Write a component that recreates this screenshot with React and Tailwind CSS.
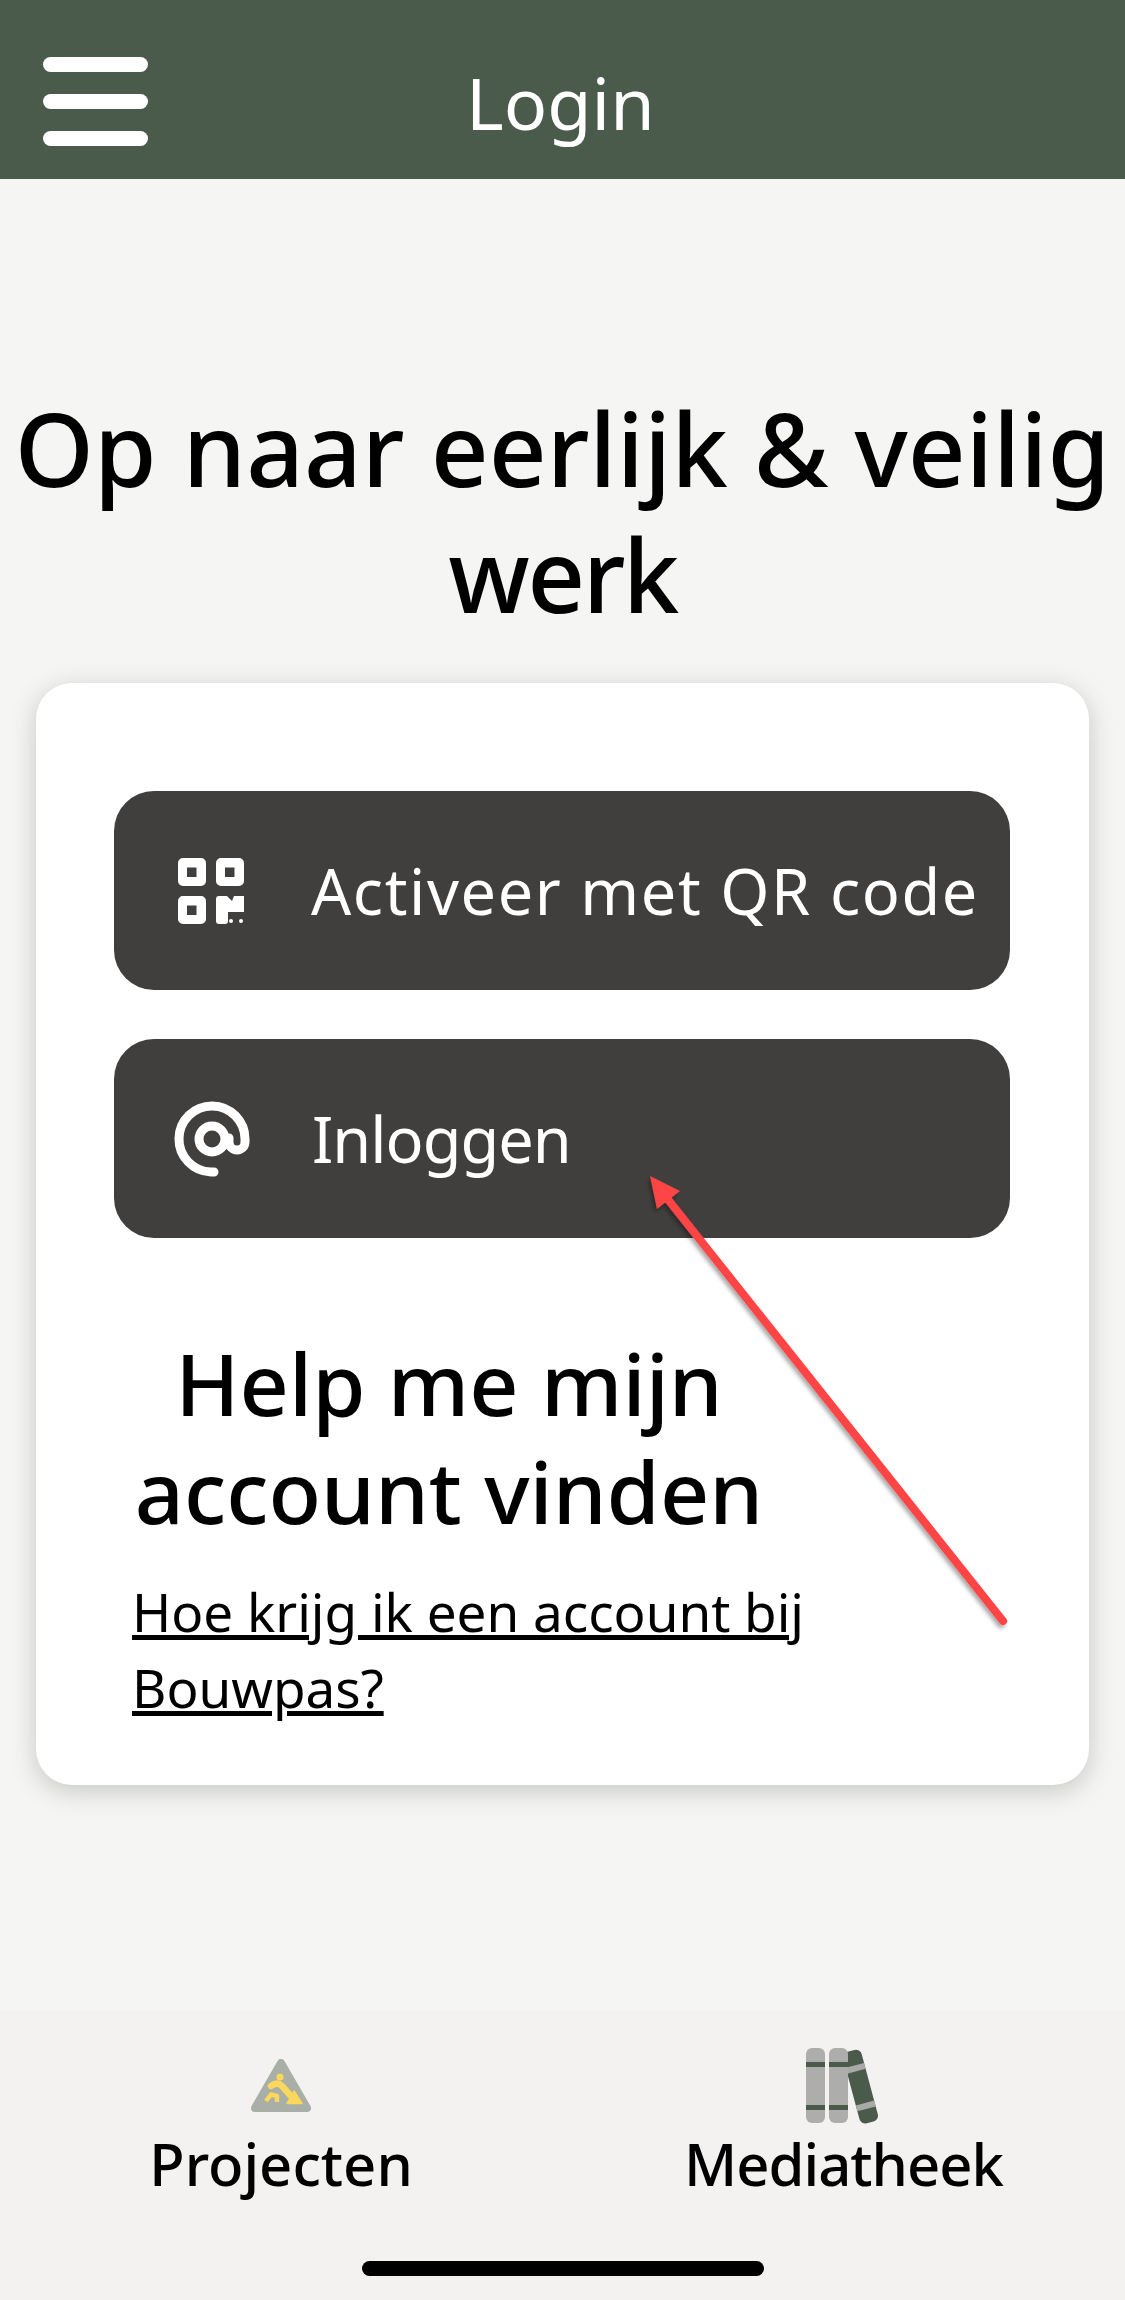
import React from 'react';

const font = { fontFamily: '"Noto Sans", sans-serif' };

const QrIcon = () => (
  <svg width="66" height="66" viewBox="0 0 66 66" fill="#fff" fillRule="evenodd" className="shrink-0">
    <path d="M5 0h18a5 5 0 0 1 5 5v18a5 5 0 0 1-5 5H5a5 5 0 0 1-5-5V5a5 5 0 0 1 5-5zM9 9.500v9.500h9.500V9.500z" />
    <path d="M43 0h18a5 5 0 0 1 5 5v18a5 5 0 0 1-5 5H43a5 5 0 0 1-5-5V5a5 5 0 0 1 5-5zM47 9.500v9.500h9.500V9.500z" />
    <path d="M5 38h18a5 5 0 0 1 5 5v18a5 5 0 0 1-5 5H5a5 5 0 0 1-5-5V43a5 5 0 0 1 5-5zM9 47.500v9.500h9.500v-9.500z" />
    <path d="M41 38h8l5 5 2-5h10v16h-16v9a3 3 0 0 1-3 3h-6a3 3 0 0 1-3-3V41a3 3 0 0 1 3-3z" />
    <circle cx="53" cy="63" r="2" />
    <circle cx="63" cy="63" r="2" />
  </svg>
);

const AtIcon = () => (
  <svg width="76" height="76" viewBox="0 0 76 76" fill="none" stroke="#fff" strokeWidth="9" strokeLinecap="round" className="shrink-0">
    <path d="M40 71h-3A33 33 0 1 1 71 38v3a8 8 0 0 1-16 0v-4" />
    <circle cx="38" cy="38" r="13" />
  </svg>
);

const WorkerIcon = () => (
  <svg width="60" height="53" viewBox="0 0 60 53">
    <path d="M30 4 L56 49 H4 Z" fill="#a9aea7" stroke="#a9aea7" strokeWidth="8" strokeLinejoin="round" />
    <circle cx="29" cy="18" r="3.500" fill="#fbd75b" />
    <path d="M20 27C24 24 28 24 31 27L39 36" fill="none" stroke="#fbd75b" strokeWidth="6.500" strokeLinecap="round" strokeLinejoin="round" />
    <path d="M15 42L20 35.500L26 37V43" fill="none" stroke="#fbd75b" strokeWidth="4.500" strokeLinejoin="round" />
    <path d="M43 32l8 12.500H36z" fill="#fbd75b" stroke="#fbd75b" strokeWidth="1.500" strokeLinejoin="round" />
  </svg>
);

const BooksIcon = () => (
  <svg width="76" height="76" viewBox="0 0 76 76">
    <g transform="rotate(-15 57 38)">
      <rect x="45" y="1" width="19" height="74" rx="6" fill="#4a5b4c" />
      <rect x="45" y="16" width="19" height="6" fill="#a9aaa7" />
      <rect x="45" y="55" width="19" height="6" fill="#a9aaa7" />
    </g>
    <rect x="0" y="0" width="19" height="75" rx="6" fill="#adadab" />
    <rect x="0" y="14" width="19" height="5" fill="#4a5b4c" />
    <rect x="0" y="57" width="19" height="5" fill="#4a5b4c" />
    <rect x="23" y="0" width="19" height="75" rx="6" fill="#adadab" />
    <rect x="23" y="14" width="19" height="5" fill="#4a5b4c" />
    <rect x="23" y="57" width="19" height="5" fill="#4a5b4c" />
  </svg>
);

const ActionButton = ({ icon, label, iconClass, labelClass }) => (
  <button className="flex h-[199px] w-[896px] items-center rounded-[40px] bg-[#403f3d] text-left text-white">
    <span className={iconClass}>{icon}</span>
    <span className={labelClass}>{label}</span>
  </button>
);

const App = () => {
  return (
    <div className="relative flex h-[2300px] w-[1125px] flex-col overflow-hidden bg-[#f5f5f3] text-black" style={font}>
      {/* Header */}
      <header className="flex h-[179px] shrink-0 items-center bg-[#4a5b4c] pt-[24px] pl-[43px]">
        <div className="flex w-[105px] flex-col gap-[22px]">
          <div className="h-[15px] rounded-full bg-white"></div>
          <div className="h-[15px] rounded-full bg-white"></div>
          <div className="h-[15px] rounded-full bg-white"></div>
        </div>
        <h1 className="ml-[318px] text-[72px] leading-none text-white">Login</h1>
      </header>

      {/* Title */}
      <h2 className="mt-[206px] text-center text-[101px] leading-[126px] font-medium whitespace-nowrap">
        Op naar eerlijk &amp; veilig
        <br />
        <span className="tracking-[-2.5px]">werk</span>
      </h2>

      {/* Card */}
      <div className="mx-[36px] mt-[46px] h-[1102px] rounded-[36px] bg-white px-[78px] pt-[108px] shadow-[0_6px_24px_rgba(60,70,60,0.25)]">
        <div className="flex flex-col gap-[49px]">
          <ActionButton
            icon={<QrIcon />}
            iconClass="mr-[67px] ml-[64px]"
            labelClass="text-[63px] leading-none tracking-[1.6px]"
            label="Activeer met QR code"
          />
          <ActionButton
            icon={<AtIcon />}
            iconClass="mr-[62px] ml-[60px]"
            labelClass="text-[63px] leading-none tracking-[-1px]"
            label="Inloggen"
          />
        </div>
        <h3 className="mt-[91px] ml-[15px] w-[640px] text-center text-[86px] leading-[108px] font-medium">
          Help me mijn account vinden
        </h3>
        <a className="mt-[29px] ml-[18px] block w-[700px] text-[53px] leading-[76px] underline" href="#">
          Hoe krijg ik een account bij Bouwpas?
        </a>
      </div>

      {/* Annotation arrow */}
      <svg className="absolute top-0 left-0" width="1125" height="2300" viewBox="0 0 1125 2300" fill="none">
        <defs>
          <filter id="arrowShadow" x="-20%" y="-20%" width="140%" height="140%">
            <feDropShadow dx="-2" dy="3" stdDeviation="2" floodColor="#000" floodOpacity="0.35" />
          </filter>
        </defs>
        <g filter="url(#arrowShadow)">
          <line x1="1003" y1="1621" x2="666" y2="1197" stroke="#fd4444" strokeWidth="8" strokeLinecap="round" />
          <path d="M650 1176l30 15-23 18z" fill="#fd4444" />
        </g>
      </svg>

      {/* Bottom tabs */}
      <nav className="mt-auto flex h-[290px] shrink-0 flex-col bg-[#f3f2f0]">
        <div className="flex h-[250px] pt-[38px]">
          <div className="flex w-[562px] flex-col items-center">
            <div className="mt-[11px] flex h-[53px] items-center"><WorkerIcon /></div>
            <span className="mt-[20px] text-[58px] leading-[64px] font-medium">Projecten</span>
          </div>
          <div className="flex flex-1 flex-col items-center">
            <BooksIcon />
            <span className="mt-[8px] text-[58px] leading-[64px] font-medium tracking-[-1px]">Mediatheek</span>
          </div>
        </div>
        <div className="mx-auto mt-[1px] h-[15px] w-[402px] rounded-full bg-black"></div>
      </nav>
    </div>
  );
};

export default App;
